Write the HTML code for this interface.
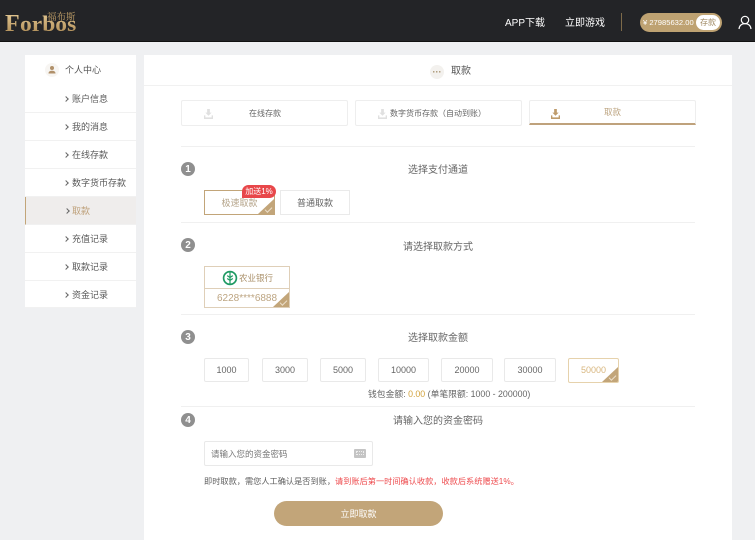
<!DOCTYPE html>
<html lang="zh">
<head>
<meta charset="utf-8">
<title>取款</title>
<style>
html,body{margin:0;padding:0}
body{width:755px;height:540px;overflow:hidden;position:relative;background:#eff0f2;font-family:"Liberation Sans","Noto Sans CJK SC",sans-serif;color:#555;font-size:9px}
.a{position:absolute;white-space:nowrap;box-sizing:border-box}
.c{display:flex;align-items:center;justify-content:center}
.box{background:#fff;border:1px solid #e9e9e9;border-radius:2px}
.hr{position:absolute;left:181px;width:514px;height:1px;background:#f0f0f0}
.num{position:absolute;left:181px;width:14px;height:14px;border-radius:50%;background:#8f8f8f;color:#fff;font-size:10px;font-weight:bold;display:flex;align-items:center;justify-content:center}
.title{position:absolute;left:181px;width:514px;text-align:center;font-size:10px;color:#666;line-height:14px}
.menu{position:absolute;left:25px;width:111px;height:28px;background:#fff;border-bottom:1px solid #f1f1f1;box-sizing:border-box;line-height:29px;padding-left:47px;font-size:9px;color:#5a5a5a}
.menu:before{content:"";position:absolute;left:39px;top:12px;width:3px;height:3px;border-top:1px solid #666;border-right:1px solid #666;transform:rotate(45deg)}
.corner{position:absolute;right:0;bottom:0;width:0;height:0;border-style:solid;border-width:0 0 15px 16px;border-color:transparent transparent #c2a579 transparent}
.tick{position:absolute;right:2px;bottom:3px;width:6px;height:3px;border-left:1px solid #ecdfca;border-bottom:1px solid #ecdfca;transform:rotate(-45deg)}
.amt{font-size:9px;color:#666}
.gold{background:linear-gradient(180deg,#e6cb96,#a98650);-webkit-background-clip:text;background-clip:text;color:transparent}
</style>
</head>
<body>
<!-- header -->
<div class="a" style="left:0;top:0;width:755px;height:42px;background:#232427;border-bottom:1px solid #111"></div>
<div class="a gold" style="left:5px;top:12px;font-family:'Liberation Serif',serif;font-weight:bold;font-size:24px;line-height:24px">F</div>
<div class="a gold" style="left:20px;top:12px;font-family:'Liberation Serif',serif;font-weight:bold;font-size:22px;line-height:24px;transform:scaleX(1.07);transform-origin:0 0">orbos</div>
<div class="a" style="left:47px;top:10px;font-family:'Noto Serif CJK SC',serif;font-size:9.500px;line-height:12px;color:#c9a66b">福布斯</div>
<div class="a" style="left:505px;top:17px;font-size:10px;line-height:14px;color:#fff">APP下载</div>
<div class="a" style="left:565px;top:17px;font-size:10px;line-height:14px;color:#fff">立即游戏</div>
<div class="a" style="left:621px;top:13px;width:1px;height:18px;background:#7d6a49"></div>
<div class="a" style="left:640px;top:13px;width:82px;height:19px;border-radius:10px;background:#bea272"></div>
<div class="a" style="left:643px;top:16px;font-size:7.600px;line-height:13px;color:#fff">¥ 27985632.00</div>
<div class="a c" style="left:696px;top:15px;width:24px;height:15px;border-radius:8px;background:#fff;color:#a08a63;font-size:8px">存款</div>
<svg class="a" style="left:738px;top:15px" width="14" height="15" viewBox="0 0 14 15" fill="none" stroke="#fff" stroke-width="1.2"><circle cx="7" cy="5" r="3.7"/><path d="M1 14c.4-3.5 2.600-5.300 6-5.300s5.600 1.800 6 5.300"/></svg>

<!-- sidebar -->
<div class="a" style="left:25px;top:55px;width:111px;height:253px;background:#fff"></div>
<div class="a" style="left:45px;top:63px;width:14px;height:14px;border-radius:50%;background:#f7f5f2"></div>
<svg class="a" style="left:47px;top:65px" width="10" height="10" viewBox="0 0 10 10" fill="#b0906a"><circle cx="5" cy="3" r="2"/><path d="M1.500 8.500c0-2 1.500-2.800 3.500-2.800s3.500.8 3.500 2.800z"/></svg>
<div class="a" style="left:65px;top:63px;font-size:9px;line-height:14px;color:#555">个人中心</div>
<div class="menu" style="top:85px">账户信息</div>
<div class="menu" style="top:113px">我的消息</div>
<div class="menu" style="top:141px">在线存款</div>
<div class="menu" style="top:169px">数字货币存款</div>
<div class="menu" style="top:197px;background:#efedec;color:#bfa27c;border-left:1px solid #c2a579;padding-left:46px">取款</div>
<div class="menu" style="top:225px">充值记录</div>
<div class="menu" style="top:253px">取款记录</div>
<div class="menu" style="top:281px;height:27px">资金记录</div>

<!-- main -->
<div class="a" style="left:144px;top:55px;width:588px;height:485px;background:#fff"></div>
<div class="a" style="left:144px;top:85px;width:588px;height:1px;background:#f1f1f1"></div>
<div class="a c" style="left:430px;top:65px;width:14px;height:14px;border-radius:50%;background:#f3f1ee;color:#a08a63;font-size:9px;line-height:10px;font-weight:bold">···</div>
<div class="a" style="left:451px;top:64px;font-size:10px;line-height:15px;color:#555">取款</div>

<!-- tabs -->
<div class="a box c" style="left:181px;top:100px;width:167px;height:26px;border:1px solid #eee;color:#666;font-size:8px;padding-left:1px">在线存款</div>
<svg class="a" style="left:204px;top:109px" width="9" height="10" viewBox="0 0 10 11" fill="#e0e0e0"><path d="M3.500 0h3v4h2L5 7.500 1.500 4h2z"/><path d="M0 7h1.500v2.200h7V7H10v4H0z"/></svg>
<div class="a box" style="left:355px;top:100px;width:167px;height:26px;border:1px solid #eee"></div>
<div class="a" style="left:390px;top:107px;font-size:8px;line-height:13px;color:#666">数字货币存款（自动到账）</div>
<svg class="a" style="left:378px;top:109px" width="9" height="10" viewBox="0 0 10 11" fill="#e0e0e0"><path d="M3.500 0h3v4h2L5 7.500 1.500 4h2z"/><path d="M0 7h1.500v2.200h7V7H10v4H0z"/></svg>
<div class="a box c" style="left:529px;top:100px;width:167px;height:25px;border:1px solid #eee;border-bottom:2px solid #bfa27c;border-radius:2px 2px 0 0;color:#bda582;font-size:8.500px">取款</div>
<svg class="a" style="left:551px;top:109px" width="9" height="10" viewBox="0 0 10 11" fill="#bf9c6c"><path d="M3.500 0h3v4h2L5 7.500 1.500 4h2z"/><path d="M0 7h1.500v2.200h7V7H10v4H0z"/></svg>

<div class="hr" style="top:146px"></div>

<!-- step 1 -->
<div class="num" style="top:162px">1</div>
<div class="title" style="top:164px">选择支付通道</div>
<div class="a c" style="left:204px;top:190px;width:71px;height:25px;border:1px solid #c2a579;background:#fff;color:#b5a48a;overflow:hidden">极速取款<div class="corner"></div><div class="tick"></div></div>
<div class="a" style="left:242px;top:185px;width:34px;height:13px;border-radius:7px 7px 7px 0;background:#e8474a;color:#fff;font-size:8px;line-height:13px;text-align:center">加送1%</div>
<div class="a c" style="left:280px;top:190px;width:70px;height:25px;border:1px solid #eaeaea;color:#666">普通取款</div>
<div class="hr" style="top:222px"></div>

<!-- step 2 -->
<div class="num" style="top:238px">2</div>
<div class="title" style="top:241px">请选择取款方式</div>
<div class="a" style="left:204px;top:266px;width:86px;height:42px;border:1px solid #dfcfb8;background:#fff;overflow:hidden">
  <div class="a" style="left:0;top:21px;width:84px;height:1px;background:#dfcfb8"></div>
  <div class="a" style="left:12px;top:23px;font-size:10px;line-height:18px;color:#bda582">6228****6888</div>
  <div class="corner"></div><div class="tick"></div>
</div>
<svg class="a" style="left:222px;top:270px" width="16" height="16" viewBox="0 0 17 17" fill="none" stroke="#1f9a63"><circle cx="8.500" cy="8.500" r="6.800" stroke-width="1.800"/><path d="M8.500 1v15M5.500 6l3 2 3-2M5.500 9l3 2 3-2" stroke-width="1.300"/></svg>
<div class="a" style="left:239px;top:272px;font-size:8.500px;line-height:13px;color:#a98f68">农业银行</div>
<div class="hr" style="top:314px"></div>

<!-- step 3 -->
<div class="num" style="top:330px">3</div>
<div class="title" style="top:332px">选择取款金额</div>
<div class="a box c amt" style="left:204px;top:358px;width:45px;height:24px">1000</div>
<div class="a box c amt" style="left:262px;top:358px;width:46px;height:24px">3000</div>
<div class="a box c amt" style="left:320px;top:358px;width:46px;height:24px">5000</div>
<div class="a box c amt" style="left:378px;top:358px;width:51px;height:24px">10000</div>
<div class="a box c amt" style="left:441px;top:358px;width:52px;height:24px">20000</div>
<div class="a box c amt" style="left:504px;top:358px;width:52px;height:24px">30000</div>
<div class="a c" style="left:568px;top:358px;width:51px;height:25px;border:1px solid #e6d2ac;border-radius:2px;color:#d8b67e;overflow:hidden;background:#fff;font-size:9px;padding-bottom:1px">50000<div class="corner"></div><div class="tick"></div></div>
<div class="a" style="left:368px;top:388px;font-size:8.800px;line-height:13px;color:#666">钱包金额: <span style="color:#d2a23c">0.00</span> (单笔限额: 1000 - 200000)</div>
<div class="hr" style="top:406px"></div>

<!-- step 4 -->
<div class="num" style="top:413px">4</div>
<div class="title" style="top:415px">请输入您的资金密码</div>
<div class="a box" style="left:204px;top:441px;width:169px;height:25px"></div>
<div class="a" style="left:211px;top:448px;font-size:8.500px;line-height:13px;color:#777">请输入您的资金密码</div>
<div class="a" style="left:354px;top:449px;width:12px;height:9px;background:#c4c4c4;border-radius:1px"></div>
<div class="a" style="left:356px;top:451px;width:8px;height:4px;border:1px dotted #eee"></div>
<div class="a" style="left:204px;top:475px;font-size:8.200px;line-height:13px;color:#5f5f5f">即时取款，需您人工确认是否到账，<span style="color:#ee4b4e">请到账后第一时间确认收款，收款后系统赠送1%。</span></div>
<div class="a c" style="left:274px;top:501px;width:169px;height:25px;border-radius:13px;background:#c2a579;color:#fff;font-size:9px;padding-bottom:1px">立即取款</div>
</body>
</html>
